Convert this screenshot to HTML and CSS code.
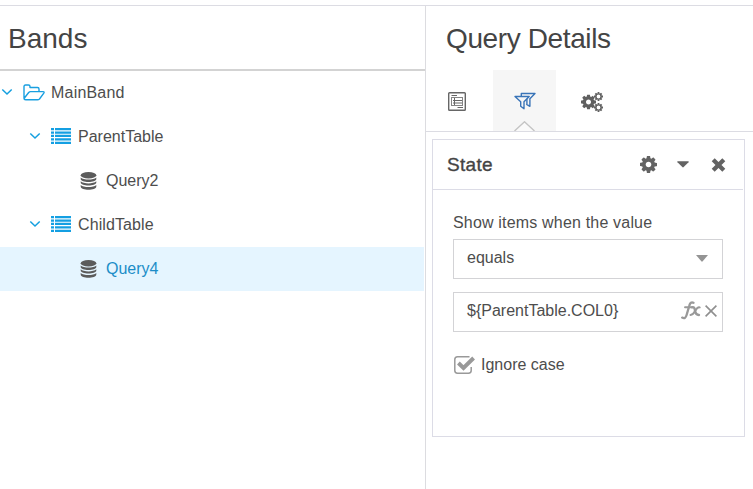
FILE: index.html
```html
<!DOCTYPE html>
<html lang="en">
<head>
<meta charset="utf-8">
<title>Bands</title>
<link rel="stylesheet" href="styles.css">
</head>
<body>
<svg class="defs" aria-hidden="true">
  <symbol id="cog" viewBox="0 128 1536 1536"><path fill="currentColor" d="M1024 896q0-106-75-181t-181-75-181 75-75 181 75 181 181 75 181-75 75-181zm512-109v222q0 12-8 23t-20 13l-185 28q-19 54-39 91 35 50 107 138 10 12 10 25t-9 23q-27 37-99 108t-94 71q-12 0-26-9l-138-108q-44 23-91 38-16 136-29 186-7 28-36 28h-222q-14 0-24.500-8.500t-11.500-21.500l-28-184q-49-16-90-37l-141 107q-10 9-25 9-14 0-25-11-126-114-165-168-7-10-7-23 0-12 8-23 15-21 51-66.500t54-70.500q-27-50-41-99l-183-27q-13-2-21-12.500t-8-23.500v-222q0-12 8-23t19-13l186-28q14-46 39-92-40-57-107-138-10-12-10-24 0-10 9-23 26-36 98.500-107.500t94.500-71.500q13 0 26 10l138 107q44-23 91-38 16-136 29-186 7-28 36-28h222q14 0 24.500 8.500t11.500 21.500l28 184q49 16 90 37l142-107q9-9 24-9 13 0 25 10 129 119 165 170 7 8 7 22 0 12-8 23-15 21-51 66.500t-54 70.500q26 50 41 98l183 28q13 2 21 12.500t8 23.500z"/></symbol>
  <symbol id="ring-cog" viewBox="-10 -10 20 20"><circle r="5.800" fill="none" stroke="currentColor" stroke-width="3.200"/><path d="M0-10V-6M0 10V6M-10 0H-6M10 0H6M-7-7-4.500-4.500M7 7 4.500 4.500M-7 7-4.500 4.500M7-7 4.500-4.500" stroke="currentColor" stroke-width="4"/></symbol>
  <symbol id="chevron" viewBox="0 0 12 8"><path fill="none" stroke="currentColor" stroke-width="1.500" d="M1.300 1.500 6 6 10.700 1.500"/></symbol>
  <symbol id="list" viewBox="0 0 20 16"><path fill="currentColor" d="M0 0h3v2.300H0zM4 0h16v2.300H4zM0 3.400h3v2.300H0zM4 3.400h16v2.300H4zM0 6.800h3v2.300H0zM4 6.800h16v2.300H4zM0 10.200h3v2.300H0zM4 10.200h16v2.300H4zM0 13.700h3V16H0zM4 13.700h16V16H4z"/></symbol>
  <symbol id="database" viewBox="0 0 16 18"><g fill="currentColor"><ellipse cx="8" cy="3.300" rx="7.800" ry="3.200"/><path d="M.2 5.400C3 8.200 13 8.200 15.800 5.400v1.500C15.800 10.900.2 10.900.2 6.900zM.2 9.300C3 12.100 13 12.100 15.800 9.300v1.300C15.800 14.600.2 14.600.2 10.600zM.2 13C3 15.800 13 15.800 15.800 13v1.500C15.800 18.900.2 18.900.2 14.500z"/></g></symbol>
</svg>
<div class="app">
  <section class="bands">
    <h1 class="title">Bands</h1>
    <div class="tree">
      <div class="row">
        <svg class="chevron"><use href="#chevron"/></svg>
        <svg class="folder" viewBox="0 0 22 17"><path fill="none" stroke="currentColor" stroke-width="1.400" stroke-linejoin="round" d="M1 14V2.500Q1 1 2.500 1H5.500Q7 1 7 2.500V3.500H14.500Q16 3.500 16 5V7.500M1 14Q1 15.800 2.800 15.800H14.500Q15.700 15.800 16.500 15L20.800 9.200Q21.700 7.600 20 7.600H7.500Q6.500 7.600 5.700 8.500L1.200 14.300"/></svg>
        <span class="label main">MainBand</span>
      </div>
      <div class="row level1">
        <svg class="chevron"><use href="#chevron"/></svg>
        <svg class="list"><use href="#list"/></svg>
        <span class="label parent">ParentTable</span>
      </div>
      <div class="row level2">
        <svg class="database"><use href="#database"/></svg>
        <span class="label">Query2</span>
      </div>
      <div class="row level1">
        <svg class="chevron"><use href="#chevron"/></svg>
        <svg class="list"><use href="#list"/></svg>
        <span class="label child">ChildTable</span>
      </div>
      <div class="row level2 selected">
        <svg class="database"><use href="#database"/></svg>
        <span class="label">Query4</span>
      </div>
    </div>
  </section>
  <section class="details">
    <h1 class="title">Query Details</h1>
    <nav class="tabs">
      <div class="tab">
        <svg class="form-icon" viewBox="0 0 18 19"><g fill="none" stroke="#666"><rect x=".7" y=".7" width="16.600" height="17.600" rx=".8" stroke-width="1.400"/><path d="M3.500 3.500H9M9.500 15.500H15"/><rect x="3.500" y="5.500" width="11" height="8" stroke="#858585"/><path d="M6.500 6v7M5 8.500h9M5 11h9" stroke-width="1"/></g></svg>
      </div>
      <div class="tab active">
        <svg class="filter-icon" viewBox="0 0 22 18"><g fill="none" stroke="#3974b8" stroke-width="1.400" stroke-linejoin="round"><path d="M1 4.500H15.200L10 9.700V16.800L6.700 14.200V9.700z"/><path d="M7.300 3.900V1.500H21L15.900 6.700V14.300L12.200 12.200M12.900 6.800V12.600"/></g></svg>
        <svg class="pointer" viewBox="0 0 20 10"><path d="M0 10 10 .8 20 10" fill="#fafafa" stroke="#c4c4c4" stroke-width="1.400"/></svg>
      </div>
      <div class="tab">
        <svg class="cogs-icon" viewBox="0 0 22 20"><use href="#cog" x="0" y="2.500" width="15" height="15"/><use href="#ring-cog" x="13" y="0" width="9" height="9"/><use href="#ring-cog" x="13" y="11" width="9" height="9"/></svg>
      </div>
    </nav>
    <article class="card">
      <header class="card-head">
        <h2 class="card-title">State</h2>
        <svg class="cog"><use href="#cog"/></svg>
        <svg class="caret" viewBox="0 0 12 7"><path fill="currentColor" d="M.8.3H11.200Q12.200.3 11.500 1.200L6.700 6.100Q6 6.700 5.300 6.100L.5 1.200Q-.2.3.8.300z"/></svg>
        <svg class="remove" viewBox="0 0 14 14"><path d="M1.700 1.700 12.300 12.300M12.300 1.700 1.700 12.300" stroke="currentColor" stroke-width="4.200"/></svg>
      </header>
      <div class="card-body">
        <label class="caption">Show items when the value</label>
        <div class="field">
          <span class="equals">equals</span>
          <svg class="caret" viewBox="0 0 12 7"><path fill="currentColor" d="M0 0H12L6.700 6.300Q6 7 5.300 6.300z"/></svg>
        </div>
        <div class="field value">
          <span class="expression">${ParentTable.COL0}</span>
          <svg class="fx" viewBox="0 0 20 19"><g fill="none" stroke="currentColor" stroke-linecap="round"><path stroke-width="2.300" d="M1.200 16.600Q4.300 18.500 5.600 14L8.400 4.400Q9.400.5 12.500 1.800"/><path stroke-width="1.900" d="M4 6.300H11.500"/><path stroke-width="2.400" d="M11 6.300Q13.500 5.300 14 9.500T18 14"/><path stroke-width="2" d="M18.700 6.400Q16.500 5.800 14.300 9.800T9.500 14"/></g></svg>
          <svg class="clear" viewBox="0 0 12 12"><path d="M.6.600 11.400 11.400M11.400.6.600 11.400" stroke="currentColor" stroke-width="1.600"/></svg>
        </div>
        <div class="check">
          <svg class="checkbox" viewBox="0 0 21 18"><path fill="none" stroke="currentColor" stroke-width="1.500" d="M15.500.8H3.500Q.8.800.8 3.500V14.500Q.8 17.200 3.500 17.200H14.500Q17.200 17.200 17.200 14.500V11"/><path fill="none" stroke="currentColor" stroke-width="3.900" d="M4.400 7 9.500 12 19.600 2"/></svg>
          <span>Ignore case</span>
        </div>
      </div>
    </article>
  </section>
</div>
</body>
</html>
```
FILE: styles.css
```css
* { box-sizing: border-box; }
body {
  margin: 0;
  padding-top: 5px;
  height: 489px;
  overflow: hidden;
  background: #fff;
  color: #4d4d4d;
  font: 16px/20px "Liberation Sans", Arial, sans-serif;
}
svg { display: block; flex: none; }
.defs { display: none; }
.app {
  display: grid;
  grid-template-columns: 425px 1fr;
  height: 484px;
  border-top: 1px solid #dcdce3;
}
.title {
  margin: 0;
  height: 65px;
  padding: 16px 0 0 8px;
  font-size: 28px;
  font-weight: 400;
  line-height: 34px;
  color: #444;
}
.bands .title { border-bottom: 2px solid #d3d3d3; }
.row {
  display: flex;
  align-items: center;
  width: 424px;
  height: 44px;
  padding-left: 1px;
}
.level1 { padding-left: 29px; }
.level2 { padding-left: 80px; }
.selected { background: #e5f5ff; }
.selected .label { color: #1c8dc8; }
.chevron { width: 12px; height: 8px; color: #149fdf; margin-bottom: 2px; }
.folder { width: 22px; height: 17px; margin: 0 6px 2px 10px; color: #199fe0; }
.list { width: 20px; height: 16px; margin: 0 7px 2px 10px; color: #149fe2; }
.database { width: 17px; height: 18px; margin: 0 9px 1px 0; color: #5b5b5b; }
.main { letter-spacing: .2px; }
.child { letter-spacing: .1px; }
.details { border-left: 1px solid #dcdce0; }
.details .title { height: 64px; padding-left: 20px; letter-spacing: -.38px; }
.tabs {
  display: flex;
  height: 62px;
  padding-left: 4px;
  border-bottom: 1px solid #dcdce3;
}
.tab {
  position: relative;
  display: flex;
  align-items: center;
  justify-content: center;
  width: 63px;
}
.tab + .tab { margin-left: 4px; }
.tab.active { background: #f6f6f6; }
.form-icon { width: 18px; height: 19px; margin: 2px 0 0 -8px; }
.tab:first-child { width: 62px; }
.tab:first-child + .tab { margin-left: 1px; }
.filter-icon { width: 22px; height: 18px; margin-top: 1px; }
.pointer { position: absolute; left: 21px; bottom: 0; width: 21px; height: 10px; }
.cogs-icon { width: 22px; height: 20px; margin-top: 2px; color: #606060; }
.card {
  width: 313px;
  height: 298px;
  margin: 7px 0 0 6px;
  border: 1px solid #dcdce6;
}
.card-head {
  display: flex;
  align-items: center;
  height: 50px;
  margin: 0 1px 0 0;
  padding: 0 17px 0 14px;
  border-bottom: 1px solid #dcdce6;
  color: #636363;
}
.card-title {
  flex: 1;
  margin: 0;
  color: #444;
  font-size: 19px;
  font-weight: 400;
  letter-spacing: .3px;
  -webkit-text-stroke: .35px #444;
}
.cog { width: 17px; height: 17px; margin-bottom: 1px; }
.card-head .caret { width: 12px; height: 7px; margin: 0 22px 1px 20px; }
.remove { width: 15px; height: 14px; }
.card-body { padding: 23px 21px 0 20px; }
.caption { display: block; letter-spacing: .18px; }
.field {
  display: flex;
  align-items: center;
  justify-content: space-between;
  width: 270px;
  height: 40px;
  margin-top: 6px;
  padding: 0 14px 2px 13px;
  border: 1px solid #d3d3d6;
}
.field .caret { width: 12px; height: 7px; color: #949494; }
.value { margin-top: 13px; padding: 0 5px 3px 13px; }
.expression { flex: 1; }
.fx { width: 20px; height: 19px; margin-right: 4px; color: #999; }
.clear { width: 12px; height: 12px; margin-top: 1px; color: #8f8f8f; }
.check { display: flex; align-items: center; margin-top: 23px; }
.checkbox { width: 21px; height: 18px; margin: 0 6px 1px 1px; color: #999; }
```
